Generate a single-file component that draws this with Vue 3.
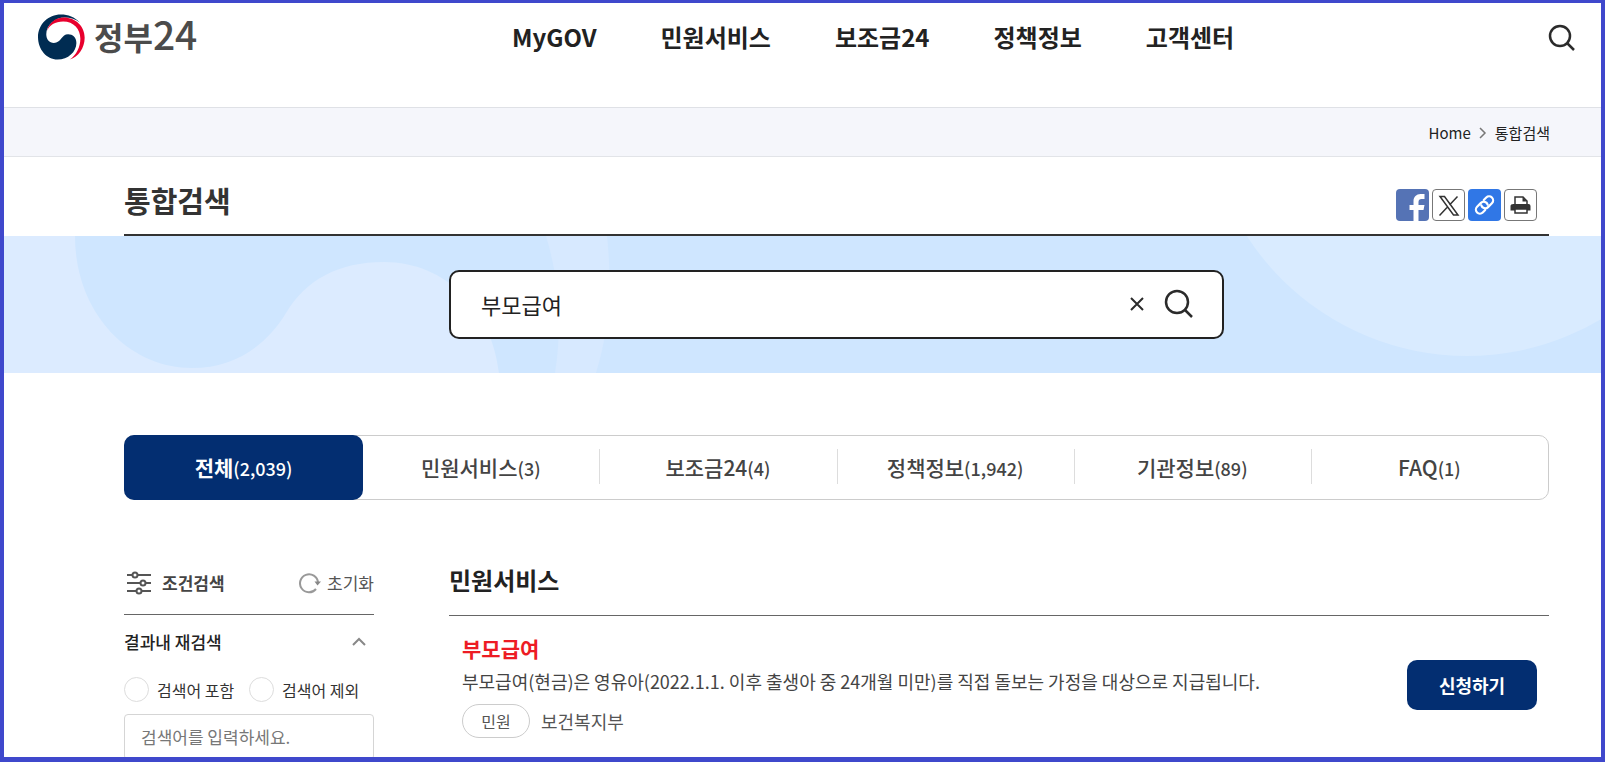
<script setup>
import { ref } from 'vue'

const menus = ['MyGOV', '민원서비스', '보조금24', '정책정보', '고객센터']

const tabs = [
  { name: '전체', count: '2,039' },
  { name: '민원서비스', count: '3' },
  { name: '보조금24', count: '4' },
  { name: '정책정보', count: '1,942' },
  { name: '기관정보', count: '89' },
  { name: 'FAQ', count: '1' },
]

const activeTab = ref('전체')
const keyword = ref('부모급여')
const within = ref('')
const mode = ref('')
const filterOpen = ref(true)

function resetFilter() {
  within.value = ''
  mode.value = ''
}
</script>

<template>
  <div class="frame">
    <!-- Header -->
    <header class="header">
      <a class="logo" href="#">
        <svg class="emblem" viewBox="114 43 142 138" aria-hidden="true">
          <path
            fill="#002c52"
            d="M240 68C225 52 205 44 183 44C145 44 114 74 114 112C114 150 140 180 173 180C205 180 230 157 230 130C230 114 219 104 205 104C185 104 184 130 162 130C148 130 139 119 139 104C139 76 165 53 195 53C212 53 228 58 240 68Z"
          />
          <path
            fill="#e8002d"
            d="M141 94C147 69 167 53 192 53C228 53 255 80 255 114C255 145 236 172 210 180C230 166 242 142 242 117C242 88 222 65 190 65C166 65 148 76 141 94Z"
          />
        </svg>
        <span class="logo-text">정부<span class="logo-num">24</span></span>
      </a>
      <nav class="menu">
        <a v-for="menu in menus" :key="menu" href="#">{{ menu }}</a>
      </nav>
      <button class="icon-btn" type="button" aria-label="검색">
        <svg width="28" height="28" viewBox="0 0 28 28">
          <circle cx="12" cy="13" r="10" />
          <path d="M19 20l7 7" />
        </svg>
      </button>
    </header>

    <!-- Breadcrumb -->
    <div class="crumbs">
      <a href="#">Home</a>
      <svg width="8" height="14" viewBox="0 0 8 14" aria-hidden="true">
        <path d="M1 3l5 5-5 5" />
      </svg>
      <span>통합검색</span>
    </div>

    <!-- Title and share buttons -->
    <div class="title-wrap">
      <div class="title-row">
        <h1>통합검색</h1>
        <div class="share">
          <button class="share-btn fb" type="button" aria-label="페이스북">
            <svg viewBox="0 0 32 32">
              <path
                fill="#fff"
                d="M17 32V21h-4v-5h4v-4c0-4 3-7 7-7h4v5h-3c-2 0-3 1-3 3v3h6l-1 5h-5v11z"
              />
            </svg>
          </button>
          <button class="share-btn line" type="button" aria-label="X">
            <svg viewBox="0 0 30 30">
              <path
                fill="none"
                stroke="#333"
                stroke-width="1.5"
                d="M6.500 6.500h4.500L24.500 25h-4.500zM24 6.500l-8 8.500M13.500 17.500l-7.500 8"
              />
            </svg>
          </button>
          <button class="share-btn link" type="button" aria-label="링크 복사">
            <svg viewBox="0 0 32 32">
              <g
                fill="none"
                stroke="#fff"
                stroke-width="2.2"
                stroke-linecap="round"
                transform="rotate(-45 16 16)"
              >
                <path d="M13 20H9.500a4 4 0 0 1 0-8H15a4 4 0 0 1 3.500 6" />
                <path d="M19 12h3.500a4 4 0 0 1 0 8H17a4 4 0 0 1-3.500-6" />
              </g>
            </svg>
          </button>
          <button class="share-btn line" type="button" aria-label="인쇄">
            <svg viewBox="0 0 30 30">
              <path fill="#fff" stroke="#333" stroke-width="1.5" d="M9.500 15V7h8l4 4v4" />
              <path fill="#333" d="M17 7v4.500h4.500zM8 14h15a2 2 0 0 1 2 2v4.500H5V16a3 2 0 0 1 3-2z" />
              <path fill="#fff" stroke="#333" stroke-width="1.5" d="M9.500 19h12v4h-12z" />
            </svg>
          </button>
        </div>
      </div>
    </div>

    <!-- Search banner -->
    <div class="banner">
      <svg class="banner-art" viewBox="0 0 1597 137" preserveAspectRatio="none" aria-hidden="true">
        <path
          fill="#dcebff"
          d="M0 0H71C71 76 124 132 188 132C230 132 262 110 282 77C302 44 334 26 380 26C442 26 488 74 495 137H0Z"
        />
        <path fill="#d7e9ff" d="M542 0C556 46 558 92 551 137H592C606 92 608 46 603 0Z" />
        <circle fill="#d9ebff" cx="1463" cy="-142" r="262" />
      </svg>
      <form class="search-box" @submit.prevent>
        <input v-model="keyword" type="text" aria-label="검색어" />
        <button class="icon-btn clear" type="button" aria-label="지우기" @click="keyword = ''">
          <svg width="14" height="14" viewBox="0 0 14 14">
            <path d="M1 1l12 12M13 1L1 13" />
          </svg>
        </button>
        <button class="icon-btn" type="submit" aria-label="검색">
          <svg width="30" height="30" viewBox="0 0 30 30">
            <circle cx="13" cy="13" r="11" />
            <path d="M21 21l7 7" />
          </svg>
        </button>
      </form>
    </div>

    <main class="content">
      <!-- Result tabs -->
      <div class="tabs" role="tablist">
        <button
          v-for="tab in tabs"
          :key="tab.name"
          class="tab"
          :class="{ active: tab.name === activeTab }"
          type="button"
          role="tab"
          :aria-selected="tab.name === activeTab"
          @click="activeTab = tab.name"
        >
          {{ tab.name }}<span class="count">({{ tab.count }})</span>
        </button>
      </div>

      <div class="columns">
        <!-- Filter -->
        <aside class="side">
          <div class="side-head">
            <svg class="sliders" width="24" height="24" viewBox="0 0 24 24" aria-hidden="true">
              <path d="M0 4h24M0 12h24M0 20h24" />
              <circle cx="8" cy="4" r="2.500" />
              <circle cx="16" cy="12" r="2.500" />
              <circle cx="12" cy="20" r="2.500" />
            </svg>
            <h2>조건검색</h2>
            <button class="reset" type="button" @click="resetFilter">
              <svg width="22" height="22" viewBox="0 0 22 22" aria-hidden="true">
                <path fill="none" stroke="#999" stroke-width="2" d="M17 17a9 9 0 1 1 2-6.500" />
                <path fill="#888" d="M15.500 9.500h6.500l-3.500 4z" />
              </svg>
              초기화
            </button>
          </div>
          <button class="group-head" type="button" @click="filterOpen = !filterOpen">
            결과내 재검색
            <svg width="14" height="9" viewBox="0 0 14 9" aria-hidden="true">
              <path d="M1 8l6-6 6 6" />
            </svg>
          </button>
          <div v-show="filterOpen">
            <div class="radios">
              <label><input v-model="mode" type="radio" name="mode" value="in" />검색어 포함</label>
              <label><input v-model="mode" type="radio" name="mode" value="out" />검색어 제외</label>
            </div>
            <input
              v-model="within"
              class="within"
              type="text"
              placeholder="검색어를 입력하세요."
              aria-label="결과내 검색어"
            />
          </div>
        </aside>

        <!-- Results -->
        <section class="results">
          <h2>민원서비스</h2>
          <article class="result">
            <div class="result-body">
              <h3><a href="#">부모급여</a></h3>
              <p>부모급여(현금)은 영유아(2022.1.1. 이후 출생아 중 24개월 미만)를 직접 돌보는 가정을 대상으로 지급됩니다.</p>
              <div class="meta">
                <span class="pill">민원</span>
                <span>보건복지부</span>
              </div>
            </div>
            <button class="apply" type="button">신청하기</button>
          </article>
        </section>
      </div>
    </main>
  </div>
</template>

<style>
body {
  margin: 0;
}
</style>

<style scoped>
.frame {
  box-sizing: border-box;
  height: 100vh;
  overflow: hidden;
  border: 4px solid #3f48cc;
  border-top-width: 3px;
  border-bottom-width: 5px;
  background: #fff;
  color: #222;
  font-family: "Noto Sans CJK KR", "Noto Sans", sans-serif;
  font-size: 16px;
}

.frame *,
.frame *::before {
  box-sizing: border-box;
}

a {
  color: inherit;
  text-decoration: none;
}

h1,
h2,
h3,
p {
  margin: 0;
}

button,
input {
  margin: 0;
  padding: 0;
  border: 0;
  background: none;
  color: inherit;
  font-family: inherit;
}

button {
  cursor: pointer;
}

input:focus {
  outline: none;
}

/* Header */
.header {
  display: flex;
  align-items: center;
  height: 105px;
  padding: 0 25px 36px 34px;
  border-bottom: 1px solid #dfe1e6;
}

.logo {
  display: flex;
  align-items: center;
  gap: 9px;
  flex: 0 0 474px;
}

.emblem {
  width: 47px;
  height: 46px;
}

.logo-text {
  padding-bottom: 6px;
  color: #4b4b4b;
  font-size: 32px;
  font-weight: 700;
  line-height: 46px;
}

.logo-num {
  font-size: 39px;
  font-weight: 500;
}

.menu {
  display: flex;
  flex: 1;
  gap: 64px;
  font-size: 24px;
  font-weight: 700;
  line-height: 36px;
  white-space: nowrap;
}

.icon-btn {
  display: flex;
}

.icon-btn svg {
  fill: none;
  stroke: #2b2b2b;
  stroke-width: 2.5;
}

/* Breadcrumb */
.crumbs {
  display: flex;
  align-items: center;
  justify-content: flex-end;
  gap: 8px;
  height: 49px;
  padding-right: 51px;
  border-bottom: 1px solid #e2e4e8;
  background: #f5f6fb;
  font-size: 15px;
}

.crumbs svg {
  fill: none;
  stroke: #777;
  stroke-width: 1.5;
}

/* Title */
.title-wrap {
  padding: 0 52px 0 120px;
}

.title-row {
  display: flex;
  align-items: center;
  justify-content: space-between;
  height: 79px;
  padding: 18px 12px 0 0;
  border-bottom: 2px solid #333;
}

h1 {
  padding-bottom: 9px;
  color: #333;
  font-size: 29px;
  line-height: 40px;
}

.share {
  display: flex;
  gap: 3px;
}

.share-btn {
  width: 33px;
  height: 32px;
  border-radius: 4px;
  overflow: hidden;
}

.share-btn svg {
  display: block;
  width: 100%;
  height: 100%;
}

.fb {
  background: #5573b5;
}

.link {
  background: #3077e6;
}

.line {
  border: 1px solid #777;
  background: #fff;
}

/* Banner */
.banner {
  position: relative;
  display: flex;
  padding: 34px 377px 34px 445px;
  background: #cfe6ff;
}

.banner-art {
  position: absolute;
  top: 0;
  left: 0;
  width: 100%;
  height: 100%;
}

.search-box {
  position: relative;
  display: flex;
  flex: 1;
  align-items: center;
  height: 69px;
  padding: 0 28px 2px 30px;
  border: 2px solid #222;
  border-radius: 10px;
  background: #fff;
}

.search-box input {
  flex: 1;
  min-width: 0;
  font-size: 22px;
  line-height: 32px;
}

.clear {
  margin-right: 20px;
}

.clear svg {
  stroke-width: 2;
}

/* Tabs */
.content {
  padding: 62px 52px 0 120px;
}

.tabs {
  display: grid;
  grid-template-columns: repeat(6, 1fr);
  height: 65px;
  border: 1px solid #ccc;
  border-radius: 10px;
}

.tab {
  display: flex;
  align-items: center;
  justify-content: center;
  position: relative;
  padding-bottom: 2px;
  color: #444;
  font-size: 21px;
  font-weight: 500;
}

.tab + .tab::before {
  content: "";
  position: absolute;
  left: 0;
  width: 1px;
  height: 35px;
  background: #ddd;
}

.tab.active {
  z-index: 1;
  margin: -1px;
  border-radius: 10px;
  background: #032e71;
  color: #fff;
  font-weight: 700;
}

.count {
  padding-top: 2px;
  font-size: 18px;
  font-weight: 500;
}

/* Two columns */
.columns {
  display: flex;
  gap: 75px;
  padding-top: 53px;
}

.side {
  flex: 0 0 250px;
}

.side-head {
  display: flex;
  align-items: center;
  height: 62px;
  padding: 0 0 1px 3px;
  border-bottom: 1px solid #666;
}

.side-head h2 {
  flex: 1;
  padding-left: 11px;
  color: #444;
  font-size: 17px;
  line-height: 24px;
}

.sliders {
  fill: #fff;
  stroke: #555;
  stroke-width: 2;
}

.reset {
  display: flex;
  align-items: center;
  gap: 6px;
  color: #555;
  font-size: 17px;
  line-height: 24px;
}

.group-head {
  display: flex;
  align-items: center;
  justify-content: space-between;
  width: 100%;
  height: 53px;
  padding-right: 8px;
  font-size: 17px;
  font-weight: 500;
}

.group-head svg {
  fill: none;
  stroke: #888;
  stroke-width: 2;
}

.radios {
  display: grid;
  grid-template-columns: 1fr 1fr;
  padding: 9px 0 12px;
}

.radios label {
  display: flex;
  align-items: center;
  gap: 8px;
  height: 25px;
  color: #333;
  font-size: 16px;
  line-height: 22px;
  white-space: nowrap;
}

.radios input {
  appearance: none;
  width: 25px;
  height: 25px;
  border: 1px solid #ddd;
  border-radius: 50%;
  background: #fff;
}

.radios input:checked {
  border: 8px solid #032e71;
}

.within {
  width: 100%;
  height: 46px;
  padding: 0 16px 2px;
  border: 1px solid #d5d5d5;
  border-radius: 4px;
  font-size: 17px;
}

.within::placeholder {
  color: #777;
}

/* Results */
.results {
  flex: 1;
  min-width: 0;
}

.results h2 {
  height: 63px;
  padding-top: 9px;
  border-bottom: 1px solid #666;
  font-size: 24px;
  line-height: 36px;
}

.result {
  display: flex;
  align-items: center;
  justify-content: space-between;
  gap: 20px;
  padding: 16px 12px 20px 13px;
}

.result h3 {
  color: #ed1c24;
  font-size: 21px;
  line-height: 32px;
}

.result p {
  color: #444;
  font-size: 18px;
  line-height: 34px;
}

.meta {
  display: flex;
  align-items: center;
  gap: 11px;
  padding-top: 6px;
  color: #555;
  font-size: 18px;
  line-height: 32px;
}

.pill {
  width: 68px;
  border: 1px solid #ccc;
  border-radius: 17px;
  font-size: 16px;
  text-align: center;
}

.apply {
  flex: 0 0 130px;
  height: 50px;
  border-radius: 10px;
  background: #032e71;
  color: #fff;
  font-size: 18px;
  font-weight: 700;
}
</style>
